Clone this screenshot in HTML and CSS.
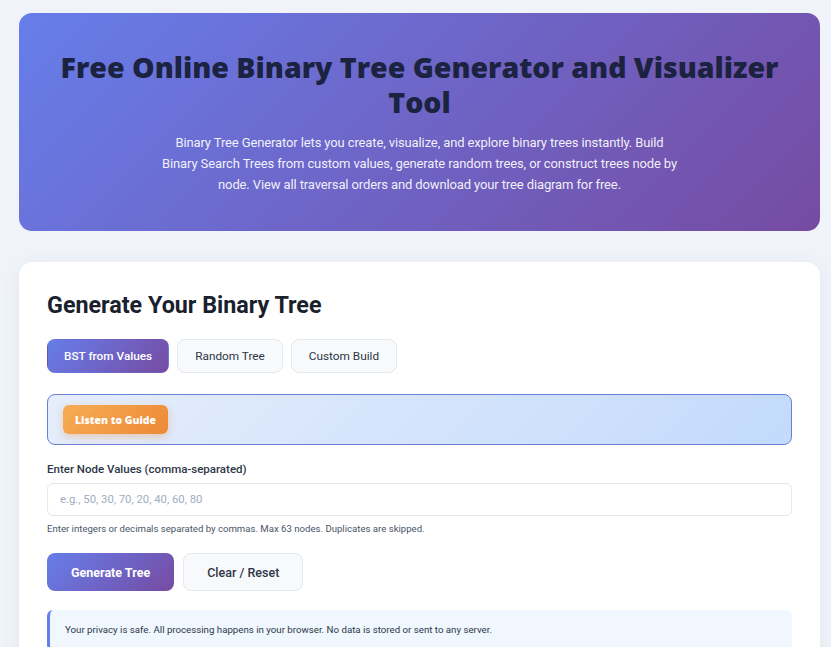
FILE: index.html
```html
<!DOCTYPE html>
<html lang="en">

<head>
  <meta charset="UTF-8">
  <meta name="viewport" content="width=device-width, initial-scale=1.0">
  <title>Free Online Binary Tree Generator and Visualizer Tool</title>
  <link rel="stylesheet" href="styles.css">
</head>

<body>
  <div class="page">
    <header class="hero">
      <h1>Free Online Binary Tree Generator and Visualizer Tool</h1>
      <p>Binary Tree Generator lets you create, visualize, and explore binary trees instantly. Build Binary Search Trees from custom values, generate random trees, or construct trees node by node. View all traversal orders and download your tree diagram for free.</p>
    </header>

    <main class="card">
      <h2 class="card-title">Generate Your Binary Tree</h2>

      <div class="tabs">
        <button class="tab active">BST from Values</button>
        <button class="tab">Random Tree</button>
        <button class="tab">Custom Build</button>
      </div>

      <div class="guide">
        <button class="guide-btn">Listen to Guide</button>
      </div>

      <label class="field-label" for="nodeValues">Enter Node Values (comma-separated)</label>
      <input type="text" id="nodeValues" class="field-input" placeholder="e.g., 50, 30, 70, 20, 40, 60, 80">
      <p class="field-help">Enter integers or decimals separated by commas. Max 63 nodes. Duplicates are skipped.</p>

      <div class="actions">
        <button class="btn btn-primary">Generate Tree</button>
        <button class="btn btn-secondary">Clear / Reset</button>
      </div>

      <div class="privacy">
        Your privacy is safe. All processing happens in your browser. No data is stored or sent to any server.
      </div>
    </main>
  </div>
</body>

</html>
```
FILE: styles.css
```css
body {
  font-family: Roboto, Arial, sans-serif;
  margin: 0;
  background-color: #f0f4fa; /* pale blue-gray */
  color: #2d3748;
}

.page {
  margin: 13px 11px 0 19px;
}

/* header banner */
.hero {
  padding: 37px 30px 36px;
  border-radius: 13px;
  background: linear-gradient(135deg, #667eea 0%, #764ba2 100%);
  text-align: center;
}

.hero h1 {
  margin: 0;
  font-family: "Open Sans", Arial, sans-serif;
  font-size: 28.5px;
  font-weight: 800;
  line-height: 35px;
  color: #1b2340; /* dark navy */
}

.hero p {
  max-width: 518px;
  margin: 12px auto 0;
  font-size: 13px;
  letter-spacing: -0.12px;
  line-height: 21px;
  color: rgba(255, 255, 255, 0.92);
}

/* main panel */
.card {
  display: block;
  margin-top: 31px;
  padding: 30px 28px 40px;
  border-radius: 14px;
  background-color: #fff;
  box-shadow: 0 4px 20px rgba(30, 41, 80, 0.07);
}

.card-title {
  margin: 0 0 20px;
  font-size: 23.3px;
  font-weight: 700;
  line-height: 27px;
  color: #1a202c;
}

.tabs {
  display: flex;
  gap: 8px;
  margin-bottom: 21px;
}

.tab {
  height: 34px;
  padding: 0 17px;
  border: 1px solid #e2e8f0;
  border-radius: 8px;
  background-color: #f7f9fb;
  font-family: inherit;
  font-size: 11.8px;
  font-weight: 400;
  color: #2d3748;
  cursor: pointer;
}

.tab.active {
  padding: 0 16px;
  border-color: transparent;
  background: linear-gradient(135deg, #667eea 0%, #764ba2 100%);
  color: #fff;
  font-weight: 500;
}

.guide {
  padding: 10px 15px;
  border: 1px solid #6a80d4;
  border-radius: 8px;
  background: linear-gradient(135deg, #e6eefc 0%, #c3dafc 100%);
}

.guide-btn {
  height: 29px;
  padding: 0 12px;
  border: none;
  border-radius: 6px;
  background: linear-gradient(135deg, #f6ad55 0%, #ed8936 100%);
  box-shadow: 0 3px 8px rgba(237, 137, 54, 0.35);
  font-family: "Open Sans", Arial, sans-serif;
  font-size: 10.4px;
  font-weight: 800;
  color: #fff;
  cursor: pointer;
}

.field-label {
  display: block;
  margin-top: 16px;
  font-size: 11.5px;
  font-weight: 500;
  line-height: 16px;
  color: #2d3748;
}

.field-input {
  display: block;
  box-sizing: border-box;
  width: 100%;
  height: 33px;
  margin-top: 6px;
  padding: 0 12px;
  border: 1px solid #e2e8f0;
  border-radius: 6px;
  background-color: #fff;
  font-family: inherit;
  font-size: 11.3px;
  color: #2d3748;
}

.field-input::placeholder {
  color: #a0aec0;
}

.field-help {
  margin: 6px 0 0;
  font-size: 9.6px;
  line-height: 13px;
  color: #4a5568;
}

.actions {
  display: flex;
  gap: 9px;
  margin-top: 18px;
}

.btn {
  height: 38px;
  padding: 0 24px;
  border-radius: 8px;
  font-family: inherit;
  font-size: 12.5px;
  cursor: pointer;
}

.btn-primary {
  border: none;
  background: linear-gradient(135deg, #667eea 0%, #764ba2 100%);
  color: #fff;
  font-weight: 700;
}

.btn-secondary {
  padding: 0 23px;
  border: 1px solid #e2e8f0;
  background-color: #f8f9fb;
  color: #2d3748;
  font-weight: 500;
}

.privacy {
  margin-top: 19px;
  padding: 12.5px 15px 14px;
  border-left: 3px solid #667eea;
  border-radius: 6px;
  background-color: #f0f7ff;
  font-size: 9.7px;
  line-height: 14px;
  color: #2d3748;
}
```
